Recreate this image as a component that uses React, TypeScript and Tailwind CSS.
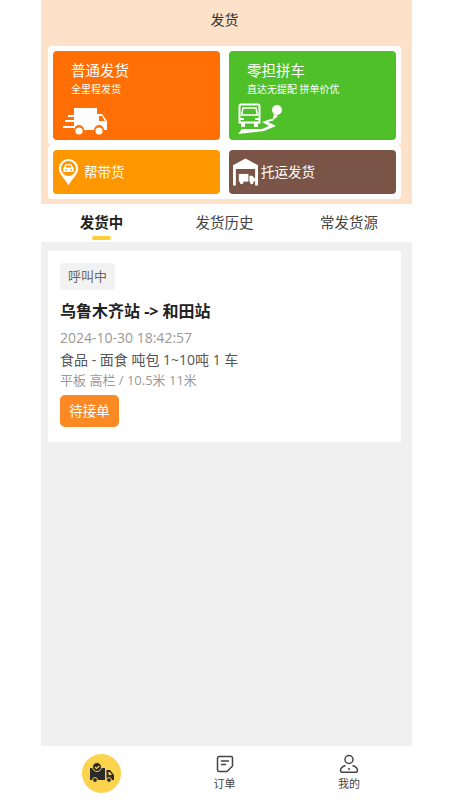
const FONT = { fontFamily: '"Open Sans", "Noto Sans CJK SC", sans-serif' }

function TruckFast() {
  return (
    <svg width="46" height="30" viewBox="0 0 46 30" fill="#fff">
      <path d="M12 1h23v6h5l5 7v9h-3a5 5 0 0 0-10 0H22a5 5 0 0 0-10 0z" />
      <path d="M37 9v5h6l-3-5z" fill="#ff6f06" />
      <circle cx="17" cy="24" r="3.6" />
      <circle cx="37" cy="24" r="3.6" />
      <rect x="6" y="8" width="10" height="2" />
      <rect x="3" y="13" width="13" height="2" />
      <rect x="1" y="19" width="11" height="2" />
    </svg>
  )
}

function TruckRoute() {
  return (
    <svg width="46" height="32" viewBox="0 0 46 32" fill="none">
      <path d="M3 1.500h17a1.500 1.500 0 0 1 1.500 1.500v16.500h-20V3A1.500 1.500 0 0 1 3 1.500z" stroke="#fff" strokeWidth="2" />
      <path d="M5 5h13l1.500 7h-16z" stroke="#fff" strokeWidth="1.500" />
      <path d="M2 15h4v2H2zM17 15h4v2h-4z" fill="#fff" />
      <path d="M3 20h4v4H3zM16 20h4v4h-4z" fill="#fff" />
      <path d="M0 31l4-5h20l7-3-7-4 9-3 3 1-6 2 8 4-12 5z" fill="#fff" />
      <circle cx="39" cy="7" r="5" fill="#fff" />
      <path d="M36 11l4 2-6 5z" fill="#fff" />
    </svg>
  )
}

function PinCar() {
  return (
    <svg width="21" height="28" viewBox="0 0 24 32">
      <path d="M12 1a11 11 0 0 1 11 11c0 7-7 12-11 19C8 24 1 19 1 12A11 11 0 0 1 12 1z" fill="#fff" />
      <circle cx="12" cy="12" r="8.500" fill="#ff9800" />
      <path d="M6 16v-4l2.500-5h7l2.500 5v4z" fill="#fff" />
      <rect x="9" y="8.500" width="6" height="2.500" fill="#ff9800" />
      <circle cx="9" cy="13.500" r="1" fill="#ff9800" />
      <circle cx="15" cy="13.500" r="1" fill="#ff9800" />
    </svg>
  )
}

function Warehouse() {
  return (
    <svg width="25" height="28" viewBox="0 0 26 28" fill="#fff">
      <path d="M13 0l13 7v21h-3V11H3v17H0V7z" />
      <rect x="6" y="16" width="10" height="8" />
      <path d="M17 18h3l3 3v3h-6z" />
      <circle cx="9" cy="25" r="1.800" />
      <circle cx="19.500" cy="25" r="1.800" />
    </svg>
  )
}

function TruckNav() {
  return (
    <svg width="26" height="22" viewBox="0 0 26 22" fill="#2b2b2b">
      <path d="M1 6h15v12H1z" />
      <path d="M17.500 8h3.500l4 5v5h-7.500z" />
      <path d="M19.500 10h1.500l2 3h-3.500z" fill="#fcd34d" />
      <circle cx="6" cy="18" r="2.400" stroke="#fcd34d" />
      <circle cx="20" cy="18" r="2.400" stroke="#fcd34d" />
      <circle cx="8" cy="5" r="4.500" stroke="#fcd34d" />
      <path d="M6 5l1.500 1.500L10.500 4" fill="none" stroke="#fcd34d" strokeWidth="1.200" />
    </svg>
  )
}

function NoteIcon() {
  return (
    <svg width="18" height="18" viewBox="0 0 18 18" fill="none" stroke="#444" strokeWidth="1.500" strokeLinejoin="round" strokeLinecap="round">
      <path d="M3 1.500h12a1.500 1.500 0 0 1 1.500 1.500v8l-5.500 5.500H3A1.500 1.500 0 0 1 1.500 15V3A1.500 1.500 0 0 1 3 1.500z" />
      <path d="M5.500 6h7M5.500 9.500h4" />
    </svg>
  )
}

function UserIcon() {
  return (
    <svg width="20" height="20" viewBox="0 0 20 20" fill="none" stroke="#444" strokeWidth="1.500" strokeLinejoin="round">
      <circle cx="10" cy="5.500" r="4" />
      <path d="M6.500 11.500C3.500 12.500 1.500 14.500 1.500 16.500c0 1 .5 1.800 1.500 1.800h14c1 0 1.500-.8 1.500-1.800 0-2-2-4-5-5" />
      <path d="M10 14v2" />
    </svg>
  )
}

export default function App() {
  return (
    <div className="min-h-[800px] bg-white" style={FONT}>
      <div className="ml-[41px] flex h-[800px] w-[371px] flex-col bg-[#f0f0f0]">
        <div className="h-[204px] shrink-0 bg-[#fde1c8] pl-[7px] pr-[11px]">
          <div className="flex h-[46px] items-center justify-center pb-[8px] text-[14px] text-[#333]">发货</div>
          <div className="flex h-[99px] gap-[9px] rounded-[4px] bg-white p-[5px]">
            <div className="flex h-[89px] w-[167px] flex-col rounded-[4px] bg-[#ff6f06] pl-[18px] pt-[10px] text-white">
              <div className="text-[14.500px] leading-[20px]">普通发货</div>
              <div className="text-[10px] leading-[16px]">全里程发货</div>
              <div className="-ml-[9px] mt-[10px]"><TruckFast /></div>
            </div>
            <div className="flex h-[89px] w-[167px] flex-col rounded-[4px] bg-[#4fc02a] pl-[18px] pt-[10px] text-white">
              <div className="text-[14.500px] leading-[20px]">零担拼车</div>
              <div className="text-[10px] leading-[16px]">直达无提配 拼单价优</div>
              <div className="-ml-[9px] mt-[6px]"><TruckRoute /></div>
            </div>
          </div>
          <div className="flex h-[54px] gap-[9px] rounded-[4px] bg-white p-[5px]">
            <div className="flex h-[44px] w-[167px] items-center gap-[5px] rounded-[4px] bg-[#ff9800] pl-[5px] text-[13.500px] text-white">
              <PinCar />
              <span>帮带货</span>
            </div>
            <div className="flex h-[44px] w-[167px] items-center gap-[3px] rounded-[4px] bg-[#7a5547] pl-[4px] text-[13.500px] text-white">
              <Warehouse />
              <span>托运发货</span>
            </div>
          </div>
        </div>

        <div className="flex h-[38px] shrink-0 bg-white text-[14.500px] text-[#444]">
          <div className="relative flex w-[121px] items-center justify-center font-bold text-[#222]">
            发货中
            <div className="absolute bottom-[2px] h-[4px] w-[19px] rounded-[2px] bg-[#fbcf33]" />
          </div>
          <div className="flex w-[125px] items-center justify-center">发货历史</div>
          <div className="flex w-[124px] items-center justify-center">常发货源</div>
        </div>

        <div className="flex-1 pl-[7px] pr-[11px] pt-[9px]">
          <div className="h-[191px] bg-white px-[12px] pt-[12px]">
            <div className="flex h-[27px] w-[55px] items-center justify-center rounded-[3px] bg-[#f2f2f2] text-[13px] text-[#666]">呼叫中</div>
            <div className="mt-[9px] text-[16px] font-bold leading-[24px] text-[#222]">乌鲁木齐站 -&gt; 和田站</div>
            <div className="mt-[5px] text-[14px] leading-[20px] text-[#999]">2024-10-30 18:42:57</div>
            <div className="mt-[1px] text-[14px] leading-[22px] text-[#555]">食品 - 面食 吨包 1~10吨 1 车</div>
            <div className="text-[13px] leading-[18px] text-[#999]">平板 高栏 / 10.5米 11米</div>
            <div className="mt-[6px] flex h-[32px] w-[59px] items-center justify-center rounded-[5px] bg-[#fb8a24] text-[13.500px] text-white">待接单</div>
          </div>
        </div>

        <div className="flex h-[54px] shrink-0 bg-white text-[11px] text-[#444]">
          <div className="flex w-[121px] items-center justify-center">
            <div className="flex h-[39px] w-[39px] items-center justify-center rounded-full bg-[#fcd34d]"><TruckNav /></div>
          </div>
          <div className="flex w-[125px] flex-col items-center pt-[9px]">
            <NoteIcon />
            <span className="mt-[3px] leading-[15px]">订单</span>
          </div>
          <div className="flex w-[124px] flex-col items-center pt-[8px]">
            <UserIcon />
            <span className="mt-[2px] leading-[15px]">我的</span>
          </div>
        </div>
      </div>
    </div>
  )
}
